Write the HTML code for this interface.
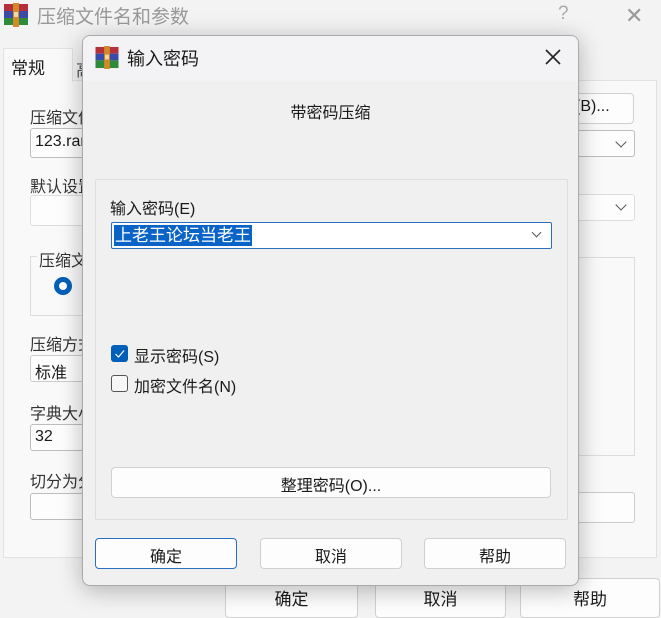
<!DOCTYPE html>
<html><head><meta charset="utf-8"><style>
*{box-sizing:border-box;margin:0;padding:0}
body{width:661px;height:612px;overflow:hidden;background:#f3f3f3;font-family:"Liberation Sans","Noto Sans CJK SC",sans-serif;font-size:16px;color:#1a1a1a;position:relative}
.a{position:absolute}
.bg{color:#333}
.box{position:absolute;background:#fdfdfd;border:1px solid #bdbdbd;border-radius:3px}
.btn{position:absolute;background:#fdfdfd;border:1px solid #d0d0d0;border-radius:4px;text-align:center;font-size:16px}
.chev{position:absolute;width:8px;height:8px;border-right:1px solid #555;border-bottom:1px solid #555;transform:rotate(45deg)}
</style></head><body>
<!-- background window -->
<svg class="a" style="left:4px;top:3px" width="24" height="24" viewBox="0 0 24 24"><rect x="0" y="1" width="24" height="7" fill="#b4303a"/><rect x="0" y="8" width="24" height="7" fill="#3a4aa8"/><rect x="0" y="15" width="24" height="7" fill="#2f8a3a"/><rect x="9" y="0" width="6" height="24" fill="#d08a2a"/><rect x="10" y="9" width="4" height="5" fill="#f2d9a0"/></svg>
<div class="a" style="left:37px;top:2px;font-size:19px;color:#999">压缩文件名和参数</div>
<div class="a" style="left:558px;top:3px;font-size:19px;color:#aaa">?</div>
<div class="a" style="left:625px;top:3px;font-size:22px;color:#999">✕</div>
<div class="a" style="left:3px;top:80px;width:654px;height:478px;background:#f9f9f9;border:1px solid #e2e2e2"></div>
<div class="a" style="left:3px;top:48px;width:70px;height:34px;background:#f9f9f9;border:1px solid #e2e2e2;border-bottom:none"></div>
<div class="a" style="left:11px;top:54px;font-size:17px">常规</div>
<div class="a" style="left:76px;top:56px;font-size:17px;color:#555">高</div>
<div class="a bg" style="left:30px;top:104px">压缩文件</div>
<div class="box" style="left:30px;top:128px;width:80px;height:30px"></div><div class="a" style="left:35px;top:133px">123.rar</div>
<div class="a bg" style="left:30px;top:173px">默认设置</div>
<div class="box" style="left:30px;top:195px;width:80px;height:31px;border-color:#ddd"></div>
<div class="a" style="left:30px;top:256px;width:70px;height:60px;border:1px solid #ddd"></div>
<div class="a bg" style="left:37px;top:247px;background:#f9f9f9;padding:0 2px">压缩文</div>
<div class="a" style="left:54px;top:277px;width:18px;height:18px;border-radius:50%;border:5px solid #005fb8;background:#fff"></div>
<div class="a bg" style="left:30px;top:331px">压缩方式</div>
<div class="box" style="left:30px;top:355px;width:80px;height:27px;border-color:#ccc"></div><div class="a" style="left:35px;top:359px">标准</div>
<div class="a bg" style="left:30px;top:400px">字典大小</div>
<div class="box" style="left:30px;top:424px;width:80px;height:27px"></div><div class="a" style="left:35px;top:428px">32</div>
<div class="a bg" style="left:30px;top:468px">切分为分</div>
<div class="box" style="left:30px;top:493px;width:80px;height:27px"></div>
<div class="btn" style="left:560px;top:93px;width:74px;height:31px;padding:4px 0 0 14px;text-align:left">(B)...</div>
<div class="box" style="left:560px;top:130px;width:75px;height:27px"></div><div class="chev" style="left:617px;top:138px"></div>
<div class="box" style="left:560px;top:194px;width:75px;height:27px;border-color:#ddd"></div><div class="chev" style="left:617px;top:201px"></div>
<div class="a" style="left:560px;top:257px;width:75px;height:199px;border:1px solid #ddd"></div>
<div class="box" style="left:560px;top:492px;width:75px;height:31px;border-color:#ccc"></div>
<div class="btn" style="left:225px;top:578px;width:133px;height:40px;padding-top:6px;font-size:17px">确定</div>
<div class="btn" style="left:375px;top:578px;width:131px;height:40px;padding-top:6px;font-size:17px">取消</div>
<div class="btn" style="left:520px;top:578px;width:140px;height:40px;padding-top:6px;font-size:17px">帮助</div>
<!-- dialog -->
<div class="a" style="left:82px;top:35px;width:497px;height:551px;background:#f0f0f0;border:1px solid #aaa;border-radius:8px;box-shadow:0 4px 24px rgba(0,0,0,.28);overflow:hidden">
<div class="a" style="left:0;top:0;width:100%;height:45px;background:#f3f3f5"></div>
<svg class="a" style="left:12px;top:10px" width="24" height="23" viewBox="0 0 24 24"><rect x="0" y="1" width="24" height="7" fill="#b4303a"/><rect x="0" y="8" width="24" height="7" fill="#3a4aa8"/><rect x="0" y="15" width="24" height="8" fill="#2f8a3a"/><rect x="9" y="0" width="6" height="24" fill="#d08a2a"/><rect x="10" y="9" width="4" height="5" fill="#f2d9a0"/></svg>
<div class="a" style="left:44px;top:9px;font-size:18px">输入密码</div>
<svg class="a" style="left:461px;top:12px" width="18" height="18"><path d="M2 2L16 16M16 2L2 16" stroke="#222" stroke-width="1.6"/></svg>
<div class="a" style="left:0;top:63px;width:100%;text-align:center;font-size:16px">带密码压缩</div>
<div class="a" style="left:12px;top:143px;width:473px;height:341px;border:1px solid #ddd;border-radius:2px"></div>
<div class="a" style="left:27px;top:159px">输入密码(E)</div>
<div class="a" style="left:28px;top:186px;width:441px;height:27px;background:#fff;border:1px solid #2b6fbf;border-radius:2px"></div>
<div class="a" style="left:31px;top:189px;background:#0a64c8;color:#fff;font-size:17px;line-height:21px;padding:0 1px">上老王论坛当老王</div>
<div class="chev" style="left:450px;top:193px;width:7px;height:7px"></div>
<div class="a" style="left:28px;top:309px;width:17px;height:17px;background:#005fb8;border-radius:3px"></div>
<svg class="a" style="left:28px;top:309px" width="17" height="17"><path d="M4.5 9L7.5 12L13 5.5" stroke="#fff" stroke-width="1.2" fill="none"/></svg>
<div class="a" style="left:51px;top:307px">显示密码(S)</div>
<div class="a" style="left:28px;top:339px;width:17px;height:17px;border:1px solid #555;border-radius:3px;background:#f7f7f7"></div>
<div class="a" style="left:51px;top:337px">加密文件名(N)</div>
<div class="btn" style="left:28px;top:431px;width:440px;height:31px;padding-top:4px">整理密码(O)...</div>
<div class="btn" style="left:12px;top:502px;width:142px;height:31px;padding-top:4px;border-color:#2b6fbf">确定</div>
<div class="btn" style="left:177px;top:502px;width:142px;height:31px;padding-top:4px">取消</div>
<div class="btn" style="left:341px;top:502px;width:142px;height:31px;padding-top:4px">帮助</div>
</div>
</body></html>
